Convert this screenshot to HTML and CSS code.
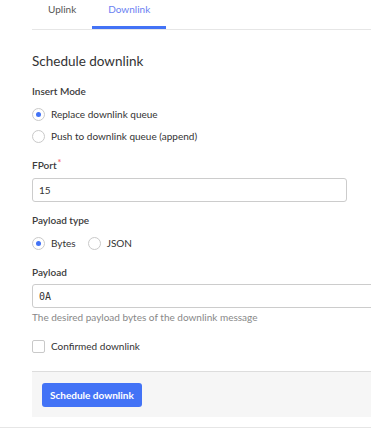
FILE: index.html
```html
<!DOCTYPE html>
<html lang="en">
<head>
  <meta charset="UTF-8" />
  <meta name="viewport" content="width=device-width, initial-scale=1" />
  <title>Downlink</title>
  <link rel="stylesheet" href="styles.css">
</head>
<body>
  <div class="page">
    <nav class="tabs" aria-label="Frame type">
      <a class="tab" href="#">Uplink</a>
      <a class="tab active" href="#">Downlink</a>
    </nav>

    <form class="downlink-form" onsubmit="return false;">
      <h2 class="title">Schedule downlink</h2>

      <div class="field">
        <span class="label">Insert Mode</span>
        <div class="radio-group stacked">
          <label class="radio checked"><span class="dot"></span>Replace downlink queue</label>
          <label class="radio"><span class="dot"></span>Push to downlink queue (append)</label>
        </div>
      </div>

      <div class="field">
        <label class="label" for="fport">FPort<span class="required">*</span></label>
        <input class="input short" id="fport" type="text" value="15" />
      </div>

      <div class="field">
        <span class="label">Payload type</span>
        <div class="radio-group inline">
          <label class="radio checked"><span class="dot"></span>Bytes</label>
          <label class="radio"><span class="dot"></span>JSON</label>
        </div>
      </div>

      <div class="field">
        <label class="label" for="payload">Payload</label>
        <input class="input wide mono" id="payload" type="text" value="0A" />
        <p class="help">The desired payload bytes of the downlink message</p>
      </div>

      <label class="checkbox"><span class="box"></span>Confirmed downlink</label>

      <div class="form-footer">
        <button type="submit" class="btn-primary">Schedule downlink</button>
      </div>
    </form>
  </div>
</body>
</html>
```

FILE: styles.css
```css
:root {
  --color-primary: #4373f6;
  --color-tab: #6a7ff2;
  --color-text: #333333;
  --color-muted: #888888;
  --color-border: #cccccc;
  --color-line: #e6e6e6;
  --font-body: 'Lato', 'Liberation Sans', sans-serif;
}

*, *::before, *::after {
  box-sizing: border-box;
}

body {
  margin: 0;
  font-family: var(--font-body);
  font-size: 10px;
  color: var(--color-text);
  background: #ffffff;
  overflow: hidden;
}

.page {
  width: 371px;
  border-bottom: 1px solid var(--color-line);
  padding-bottom: 10px;
}

/* tabs */
.tabs {
  display: flex;
  margin-left: 32px;
  border-bottom: 1px solid var(--color-line);
}
.tab {
  display: block;
  height: 29px;
  padding: 0 16px;
  font-size: 10px;
  line-height: 19px;
  border-bottom: 3px solid transparent;
  color: #555555;
  text-decoration: none;
}
.tab.active {
  color: var(--color-tab);
  border-bottom-color: var(--color-primary);
}

/* form */
.downlink-form {
  padding-left: 32px;
}
.title {
  margin: 21px 0 12px;
  font-size: 13.5px;
  line-height: 20px;
  font-weight: 400;
  color: #333333;
}
.field {
  margin-bottom: 10px;
}
.label {
  display: block;
  line-height: 16px;
  font-weight: 600;
  color: #3b3b3b;
}
.required {
  color: #f5646a;
  margin-left: 1px;
  position: relative;
  top: -3px;
  font-size: 9px;
}

.radio-group {
  margin-top: 4px;
}
.radio-group.inline {
  display: flex;
  gap: 12px;
}
.radio {
  display: flex;
  align-items: center;
  height: 22px;
  gap: 6px;
}
.dot {
  width: 13px;
  height: 13px;
  border: 1px solid #c9c9c9;
  border-radius: 50%;
  display: flex;
  align-items: center;
  justify-content: center;
  background: #ffffff;
}
.radio.checked .dot::after {
  content: '';
  width: 5px;
  height: 5px;
  border-radius: 50%;
  background: var(--color-primary);
}

.input {
  display: block;
  margin-top: 4px;
  height: 24px;
  padding: 0 6px;
  border: 1px solid var(--color-border);
  border-radius: 3px;
  font-family: var(--font-body);
  font-size: 10px;
  color: #333333;
  background: #ffffff;
}
.input.short {
  width: 315px;
}
.input.wide {
  width: 360px;
}
.input.mono {
  font-family: 'DejaVu Sans Mono', monospace;
  font-size: 10px;
}
.help {
  margin: 1px 0 0;
  line-height: 16px;
  color: var(--color-muted);
}

.checkbox {
  display: flex;
  align-items: center;
  gap: 6px;
  height: 22px;
  margin-top: 10px;
}
.box {
  width: 13px;
  height: 13px;
  border: 1px solid #c9c9c9;
  border-radius: 2px;
}

.form-footer {
  margin-top: 14px;
  width: 360px;
  padding: 11px 10px 10px;
  border-top: 1px solid #dddddd;
  background: #f6f6f6;
}
.btn-primary {
  display: block;
  height: 24px;
  padding: 0 8px;
  border: none;
  border-radius: 3px;
  background: var(--color-primary);
  color: #ffffff;
  font-family: var(--font-body);
  font-size: 10px;
  font-weight: 700;
  cursor: pointer;
}
```
